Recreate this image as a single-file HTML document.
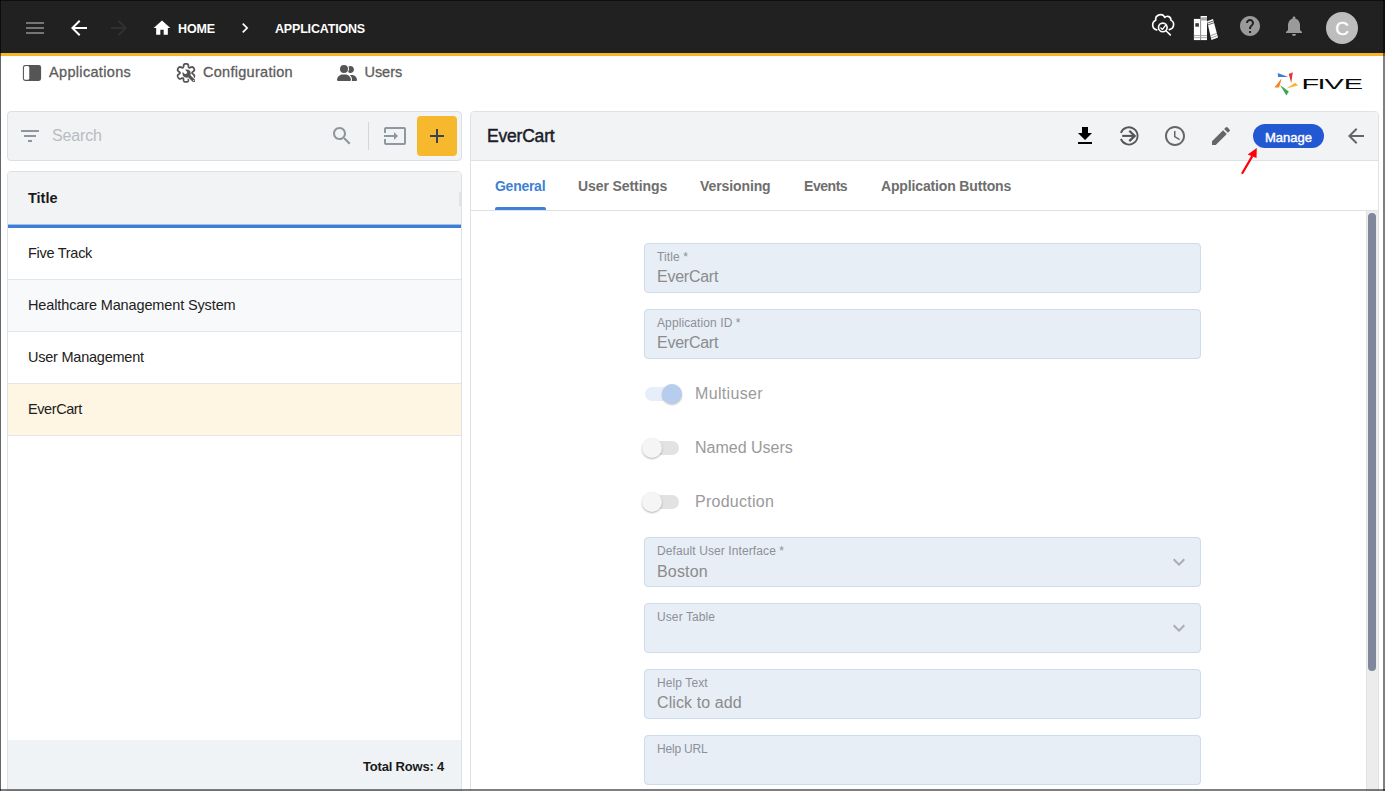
<!DOCTYPE html>
<html lang="en">
<head>
<meta charset="utf-8">
<title>Five - Applications</title>
<style>
*{box-sizing:border-box;margin:0;padding:0}
html,body{width:1385px;height:791px;overflow:hidden;background:#fff}
body{position:relative;font-family:"Liberation Sans",sans-serif;color:#222}
.abs{position:absolute}
.t{position:absolute;white-space:nowrap;line-height:1}
svg{position:absolute;overflow:visible}
/* frame */
#frame-top{left:0;top:0;width:1385px;height:1px;background:rgba(0,0,0,.55);z-index:50}
#frame-left{left:0;top:0;width:1px;height:791px;background:rgba(0,0,0,.6);z-index:50}
#frame-right{left:1383px;top:0;width:2px;height:791px;background:rgba(0,0,0,.5);z-index:50}
#frame-bottom{left:0;top:789px;width:1385px;height:2px;background:rgba(0,0,0,.5);z-index:50}
/* top bar */
#topbar{left:0;top:0;width:1385px;height:53px;background:#212121}
#orange{left:0;top:53px;width:1385px;height:3px;background:#f7b52c}
.crumb{color:#fff;font-weight:bold;font-size:12.5px;letter-spacing:-0.1px}
/* menu */
.menu{color:#5c5c5c;font-size:14.5px;-webkit-text-stroke:0.3px #5c5c5c}
/* left */
#search{left:7px;top:111px;width:455px;height:50px;background:#f1f3f5;border:1px solid #dcdfe2;border-radius:4px}
#addbtn{left:417px;top:116px;width:40px;height:40px;background:#f6b92e;border-radius:4px}
#tbl{left:7px;top:171px;width:455px;height:620px;border:1px solid #dfe2e5;border-radius:4px 4px 0 0;background:#fff;overflow:hidden}
#thead{left:0;top:0;width:453px;height:54px;background:#f1f3f5}
#tline{left:0;top:52px;width:453px;height:4px;background:#3c7dd6;border-top:1px solid #a3bfe8}
.row{position:absolute;left:0;width:453px;height:52px;border-bottom:1px solid #e3e6e9}
.row span{position:absolute;left:20px;top:18px;font-size:14.5px;line-height:1;color:#212121;white-space:nowrap}
#tfoot{left:0;top:568px;width:453px;height:51px;background:#eff3f5}
/* right */
#rpanel{left:470px;top:111px;width:909px;height:690px;border:1px solid #dfe2e5;border-radius:4px;background:#fff;overflow:hidden}
#rhead{left:0;top:0;width:907px;height:49px;background:#f1f3f5;border-bottom:1px solid #dfe2e5}
#tabs{left:0;top:49px;width:907px;height:50px;border-bottom:1px solid #dfe2e5;background:#fff}
.tab{position:absolute;top:18px;font-size:14px;font-weight:bold;color:#6e6e6e;white-space:nowrap;line-height:1}
.fld{position:absolute;left:644px;width:557px;height:50px;background:#e7eef6;border:1px solid #cddbec;border-radius:4px}
.fld .l{position:absolute;left:12px;top:7px;font-size:12px;letter-spacing:0.1px;color:#8d9096;line-height:1;white-space:nowrap}
.fld .v{position:absolute;left:12px;top:25px;font-size:16px;color:#8b8b8b;line-height:1;white-space:nowrap}
.tg{position:absolute;font-size:16px;color:#9a9a9a;line-height:1;white-space:nowrap;left:695px}
</style>
</head>
<body>
<!-- TOP BAR -->
<div class="abs" id="topbar"></div>
<div class="abs" id="orange"></div>

<!-- hamburger -->
<svg style="left:23px;top:16px" width="24" height="24" viewBox="0 0 24 24"><path fill="#757575" d="M3 18h18v-2H3v2zm0-5h18v-2H3v2zm0-7v2h18V6H3z"/></svg>
<!-- back -->
<svg style="left:67px;top:16px" width="24" height="24" viewBox="0 0 24 24"><path fill="#fff" d="M20 11H7.83l5.59-5.59L12 4l-8 8 8 8 1.41-1.41L7.83 13H20v-2z"/></svg>
<!-- forward -->
<svg style="left:107px;top:16px" width="24" height="24" viewBox="0 0 24 24"><path fill="#303030" d="M12 4l-1.41 1.41L16.170 11H4v2h12.170l-5.580 5.590L12 20l8-8z"/></svg>
<!-- home -->
<svg style="left:152px;top:18px" width="20" height="20" viewBox="0 0 24 24"><path fill="#fff" d="M10 20v-6h4v6h5v-8h3L12 3 2 12h3v8z"/></svg>
<div class="t crumb" style="left:178px;top:23px">HOME</div>
<svg style="left:235px;top:18px" width="20" height="20" viewBox="0 0 24 24"><path fill="#fff" d="M10 6L8.590 7.410 13.170 12l-4.580 4.590L10 18l6-6z"/></svg>
<div class="t crumb" style="left:275px;top:23px;letter-spacing:-0.18px">APPLICATIONS</div>

<!-- right icons -->
<svg id="ic-cloud" style="left:1145px;top:8px" width="40" height="32" viewBox="0 0 40 32" fill="none" stroke="#fff" stroke-width="1.650" stroke-linecap="round" stroke-linejoin="round">
<path d="M11.730 21.840A5.140 5.140 0 0 1 10.720 12.130A4.780 4.780 0 0 1 19.820 9.500A3.480 3.480 0 0 1 25.880 12.130A5.070 5.070 0 0 1 24.270 21.640"/>
<circle cx="17.800" cy="19.400" r="4.300"/>
<path d="M21.200 23L25.300 26.900"/>
<path d="M15.900 19.900l1.600 1.500 3.200-4.300" stroke-width="1.350"/>
</svg>
<svg id="ic-books" style="left:1185px;top:8px" width="40" height="36" viewBox="0 0 40 36">
<rect x="8.900" y="10.900" width="6.500" height="21.200" fill="#fff"/>
<rect x="8.900" y="12.800" width="6.500" height="0.500" fill="#ddd"/>
<rect x="10.300" y="15.200" width="3.600" height="3.500" fill="#3a3a3a"/>
<rect x="8.900" y="27.200" width="6.500" height="0.900" fill="#999"/>
<rect x="8.900" y="29.300" width="6.500" height="0.800" fill="#999"/>
<rect x="15.600" y="8" width="6.400" height="24.100" fill="#fff"/>
<rect x="15.400" y="10.900" width="0.700" height="21.200" fill="#8a8a8a"/>
<rect x="16.100" y="9.300" width="5.900" height="3.200" fill="#aaa"/>
<rect x="16" y="27.200" width="5.900" height="0.900" fill="#999"/>
<rect x="16" y="29.300" width="5.900" height="0.800" fill="#999"/>
<polygon points="22.100,13.200 28,10.900 33,29.600 26.400,31.900" fill="#fff"/>
<path d="M22.500 15.100L28.500 12.900M23 16.900L29 14.700" stroke="#444" stroke-width="0.850"/>
<path d="M25.300 27.700L32 25.400M25.900 29.900L32.600 27.600" stroke="#777" stroke-width="0.700"/>
</svg>
<svg style="left:1238px;top:14px" width="24" height="24" viewBox="0 0 24 24"><path fill="#9a9a9a" d="M12 2C6.480 2 2 6.480 2 12s4.480 10 10 10 10-4.480 10-10S17.520 2 12 2zm1 17h-2v-2h2v2zm2.070-7.750l-.9.920C13.450 12.900 13 13.500 13 15h-2v-.5c0-1.100.45-2.100 1.170-2.830l1.240-1.260c.37-.36.590-.86.590-1.410 0-1.100-.9-2-2-2s-2 .9-2 2H8c0-2.210 1.790-4 4-4s4 1.790 4 4c0 .88-.36 1.680-.93 2.250z"/></svg>
<svg style="left:1282px;top:14px" width="24" height="24" viewBox="0 0 24 24"><path fill="#9a9a9a" d="M12 22c1.100 0 2-.9 2-2h-4c0 1.100.89 2 2 2zm6-6v-5c0-3.070-1.640-5.640-4.500-6.320V4c0-.83-.67-1.500-1.500-1.500s-1.500.67-1.500 1.500v.68C7.630 5.360 6 7.920 6 11v5l-2 2v1h16v-1l-2-2z"/></svg>
<div class="abs" style="left:1326px;top:12px;width:32px;height:32px;border-radius:50%;background:#bdbdbd"></div>
<div class="t" style="left:1335.200px;top:18.500px;font-size:19px;color:#fff;-webkit-text-stroke:0.3px #fff">C</div>

<!-- MENU ROW -->
<svg style="left:22px;top:64px" width="20" height="18" viewBox="0 0 20 18"><rect x="0.9" y="0.9" width="18.2" height="16" rx="2.3" fill="#555"/><rect x="1.95" y="1.95" width="5.3" height="13.9" rx="1.6" fill="#fff"/></svg>
<div class="t menu" style="left:49px;top:65px;letter-spacing:0.33px">Applications</div>
<svg id="ic-cfg" style="left:170px;top:58px" width="40" height="32" viewBox="0 0 40 32" fill="none">
<mask id="wm"><rect x="0" y="0" width="40" height="32" fill="#fff"/><path d="M15.400 14.300L11.500 10.400" stroke="#000" stroke-width="3.300" stroke-linecap="round"/><circle cx="23.700" cy="22.600" r="0.650" fill="#000"/></mask>
<path d="M22.05 14.90 L22.08 15.11 L22.17 15.33 L22.35 15.57 L22.64 15.83 L23.06 16.14 L23.53 16.50 L23.96 16.88 L24.24 17.26 L24.37 17.62 L24.38 17.95 L24.33 18.27 L24.24 18.57 L24.12 18.86 L23.99 19.15 L23.84 19.43 L23.67 19.69 L23.49 19.95 L23.30 20.20 L23.08 20.43 L22.83 20.63 L22.54 20.79 L22.16 20.85 L21.70 20.80 L21.15 20.62 L20.60 20.39 L20.13 20.19 L19.75 20.06 L19.46 20.03 L19.22 20.06 L19.03 20.14 L18.86 20.27 L18.71 20.46 L18.60 20.73 L18.51 21.12 L18.45 21.63 L18.38 22.22 L18.26 22.78 L18.07 23.21 L17.83 23.50 L17.55 23.69 L17.25 23.80 L16.94 23.87 L16.63 23.92 L16.32 23.94 L16.00 23.95 L15.68 23.94 L15.37 23.92 L15.06 23.87 L14.75 23.80 L14.45 23.69 L14.17 23.50 L13.93 23.21 L13.74 22.78 L13.62 22.22 L13.55 21.63 L13.49 21.12 L13.40 20.73 L13.29 20.46 L13.14 20.27 L12.98 20.14 L12.78 20.06 L12.54 20.03 L12.25 20.06 L11.87 20.19 L11.40 20.39 L10.85 20.62 L10.30 20.80 L9.84 20.85 L9.46 20.79 L9.17 20.63 L8.92 20.43 L8.70 20.20 L8.51 19.95 L8.33 19.69 L8.16 19.43 L8.01 19.15 L7.88 18.86 L7.76 18.57 L7.67 18.27 L7.62 17.95 L7.63 17.62 L7.76 17.26 L8.04 16.88 L8.47 16.50 L8.94 16.14 L9.36 15.83 L9.65 15.57 L9.83 15.33 L9.92 15.11 L9.95 14.90 L9.92 14.69 L9.83 14.47 L9.65 14.23 L9.36 13.97 L8.94 13.66 L8.47 13.30 L8.04 12.92 L7.76 12.54 L7.63 12.18 L7.62 11.85 L7.67 11.53 L7.76 11.23 L7.88 10.94 L8.01 10.65 L8.16 10.38 L8.33 10.11 L8.51 9.85 L8.70 9.60 L8.92 9.37 L9.17 9.17 L9.46 9.01 L9.84 8.95 L10.30 9.00 L10.85 9.18 L11.40 9.41 L11.87 9.61 L12.25 9.74 L12.54 9.77 L12.78 9.74 L12.97 9.66 L13.14 9.53 L13.29 9.34 L13.40 9.07 L13.49 8.68 L13.55 8.17 L13.62 7.58 L13.74 7.02 L13.93 6.59 L14.17 6.30 L14.45 6.11 L14.75 6.00 L15.06 5.93 L15.37 5.88 L15.68 5.86 L16.00 5.85 L16.32 5.86 L16.63 5.88 L16.94 5.93 L17.25 6.00 L17.55 6.11 L17.83 6.30 L18.07 6.59 L18.26 7.02 L18.38 7.58 L18.45 8.17 L18.51 8.68 L18.60 9.07 L18.71 9.34 L18.86 9.53 L19.03 9.66 L19.22 9.74 L19.46 9.77 L19.75 9.74 L20.13 9.61 L20.60 9.41 L21.15 9.18 L21.70 9.00 L22.16 8.95 L22.54 9.01 L22.83 9.17 L23.08 9.37 L23.30 9.60 L23.49 9.85 L23.67 10.11 L23.84 10.37 L23.99 10.65 L24.12 10.94 L24.24 11.23 L24.33 11.53 L24.38 11.85 L24.37 12.18 L24.24 12.54 L23.96 12.92 L23.53 13.30 L23.06 13.66 L22.64 13.97 L22.35 14.23 L22.17 14.47 L22.08 14.69Z" stroke="#555" stroke-width="1.800" stroke-linejoin="round"/>
<path d="M19 18L23.700 22.600" stroke="#fff" stroke-width="4.800" stroke-linecap="round"/>
<g mask="url(#wm)"><circle cx="16.600" cy="15.600" r="4.100" fill="#555"/><path d="M17.500 16.500L23.700 22.600" stroke="#555" stroke-width="3.100" stroke-linecap="round"/></g>
</svg>
<div class="t menu" style="left:203px;top:65px;letter-spacing:0.28px">Configuration</div>
<svg style="left:336.85px;top:64.85px" width="20" height="16" viewBox="0 0 640 512"><path fill="#555" d="M96 128a128 128 0 1 1 256 0A128 128 0 1 1 96 128zM0 482.300C0 383.800 79.800 304 178.300 304h91.400C368.200 304 448 383.800 448 482.300c0 16.400-13.300 29.700-29.700 29.700H29.700C13.300 512 0 498.700 0 482.300zM609.300 512H471.400c5.400-9.400 8.600-20.300 8.600-32v-8c0-60.700-27.100-115.200-69.800-151.800c2.400-.1 4.700-.2 7.100-.2h61.400C567.800 320 640 392.200 640 481.300c0 17-13.800 30.700-30.700 30.700zM432 256c-31 0-59-12.600-79.300-32.900C372.400 196.500 384 163.600 384 128c0-26.800-6.600-52.100-18.300-74.300C384.300 40.100 407.200 32 432 32c61.900 0 112 50.100 112 112s-50.100 112-112 112z"/></svg>
<div class="t menu" style="left:364.500px;top:65px;letter-spacing:-0.05px">Users</div>

<!-- FIVE logo -->
<svg id="logo" style="left:1272px;top:70px" width="92" height="28" viewBox="0 0 92 28">
<polygon points="5.700,3.100 16.400,7.100 6.100,7.100" fill="#3b7ddd"/>
<polygon points="20.800,2.200 19.200,13 16.700,3.900" fill="#e0373a"/>
<polygon points="23.200,12.800 26,15.400 14.400,18.600" fill="#f9b52f"/>
<polygon points="8.100,15 16.800,21.500 14.400,25.400" fill="#3aa657"/>
<polygon points="9.700,8.300 7.100,17.600 2.400,17.600" fill="#f58426"/>
<text transform="translate(29.390,18.600) scale(2.100,1)" x="0 7.650 10.976 20.205" y="0" font-family="Liberation Sans, sans-serif" font-size="13.800" fill="#0a0a0a">FIVE</text>
</svg>

<!-- LEFT PANEL -->
<div class="abs" id="search"></div>
<svg style="left:18px;top:124px" width="24" height="24" viewBox="0 0 24 24"><path fill="#8f959c" d="M10 18h4v-2h-4v2zM3 6v2h18V6H3zm3 7h12v-2H6v2z"/></svg>
<div class="t" style="left:52px;top:128px;font-size:16px;letter-spacing:-0.15px;color:#b9bcc0">Search</div>
<svg style="left:330px;top:124px" width="24" height="24" viewBox="0 0 24 24"><path fill="#8e959c" d="M15.500 14h-.79l-.28-.27C15.410 12.590 16 11.110 16 9.500 16 5.910 13.090 3 9.500 3S3 5.910 3 9.500 5.910 16 9.500 16c1.610 0 3.090-.59 4.230-1.570l.27.280v.79l5 4.990L20.490 19l-4.990-5zm-6 0C7.010 14 5 11.990 5 9.500S7.010 5 9.500 5 14 7.010 14 9.500 11.990 14 9.500 14z"/></svg>
<div class="abs" style="left:368px;top:122px;width:1px;height:28px;background:#d4d7da"></div>
<svg style="left:383px;top:124px" width="24" height="24" viewBox="0 0 24 24"><path fill="#8e98a1" d="M21 3.010H3c-1.100 0-2 .9-2 2V9h2V4.990h18v14.030H3V15H1v4.010c0 1.100.9 1.980 2 1.980h18c1.100 0 2-.88 2-1.980v-14c0-1.110-.9-2-2-2zM11 16l4-4-4-4v3H1v2h10v3z"/></svg>
<div class="abs" id="addbtn"></div>
<svg style="left:425px;top:124px" width="24" height="24" viewBox="0 0 24 24"><path fill="#3b4150" d="M19 13h-6v6h-2v-6H5v-2h6V5h2v6h6v2z"/></svg>

<div class="abs" id="tbl">
  <div class="abs" id="thead"></div>
  <div class="t" style="left:20px;top:19px;font-size:14.500px;font-weight:bold;color:#1a1a1a">Title</div>
  <div class="abs" style="left:451px;top:20px;width:2px;height:14px;background:#e1e3e5"></div>
  <div class="abs" id="tline"></div>
  <div class="row" style="top:56px;background:#fff"><span style="letter-spacing:-0.28px">Five Track</span></div>
  <div class="row" style="top:108px;background:#f8f9fb"><span style="letter-spacing:-0.13px">Healthcare Management System</span></div>
  <div class="row" style="top:160px;background:#fff"><span style="letter-spacing:-0.23px">User Management</span></div>
  <div class="row" style="top:212px;background:#fef5e3"><span style="letter-spacing:-0.42px">EverCart</span></div>
  <div class="abs" id="tfoot"></div>
  <div class="t" style="right:17px;top:588px;font-size:13px;font-weight:bold;letter-spacing:-0.2px;color:#1a1a1a">Total Rows: 4</div>
</div>

<!-- RIGHT PANEL -->
<div class="abs" id="rpanel">
  <div class="abs" id="rhead"></div>
  <div class="abs" id="tabs"></div>
</div>
<div class="t" style="left:487px;top:128px;font-size:17.5px;letter-spacing:-0.2px;color:#1c1c28;-webkit-text-stroke:0.45px #1c1c28">EverCart</div>

<svg style="left:1073px;top:123.5px" width="24" height="24" viewBox="0 0 24 24"><path fill="#000" d="M19 9h-4V3H9v6H5l7 7 7-7zM5 18v2h14v-2H5z"/></svg>
<svg style="left:1105px;top:115px" width="50" height="40" viewBox="0 0 50 40" fill="none" stroke="#555"><path d="M15.900 17.900A8.600 8.600 0 1 1 15.900 23.900" stroke-width="1.800"/><path d="M17.200 20.900H29" stroke-width="2.050"/><path d="M24.300 15.700L29.700 20.900L24.300 26.100" stroke-width="2.250"/></svg>
<svg style="left:1163px;top:124px" width="24" height="24" viewBox="0 0 24 24"><path fill="#666" d="M11.990 2C6.470 2 2 6.480 2 12s4.470 10 9.990 10C17.520 22 22 17.520 22 12S17.520 2 11.990 2zM12 20c-4.420 0-8-3.580-8-8s3.580-8 8-8 8 3.580 8 8-3.580 8-8 8zm.5-13H11v6l5.250 3.150.75-1.230-4.500-2.670z"/></svg>
<svg style="left:1209px;top:124px" width="24" height="24" viewBox="0 0 24 24"><path fill="#666" d="M3 17.250V21h3.750L17.810 9.940l-3.750-3.750L3 17.250zM20.710 7.040c.39-.39.390-1.020 0-1.410l-2.340-2.340a.9959.996 0 0 0-1.410 0l-1.830 1.830 3.750 3.750 1.830-1.830z"/></svg>
<div class="abs" style="left:1253px;top:123.600px;width:71px;height:24.700px;border-radius:12.400px;background:#2358d3"></div>
<div class="t" style="left:1265px;top:131px;font-size:13px;color:#fff;-webkit-text-stroke:0.4px #fff">Manage</div>
<svg style="left:1344px;top:124px" width="24" height="24" viewBox="0 0 24 24"><path fill="#666" d="M20 11H7.830l5.590-5.590L12 4l-8 8 8 8 1.410-1.410L7.830 13H20v-2z"/></svg>
<!-- red arrow -->
<svg style="left:1238px;top:146px" width="24" height="30" viewBox="0 0 24 30"><path d="M4 27.750L14.300 10.100" stroke="#fb0207" stroke-width="2.200" fill="none"/><polygon points="18.800,1.900 9.700,8.400 18.500,12.100" fill="#fb0207"/></svg>

<!-- tabs -->
<div class="tab" style="left:495px;top:179px;color:#3f7fd6;letter-spacing:-0.27px">General</div>
<div class="abs" style="left:495px;top:207px;width:51px;height:3px;background:#3f7fd6;border-radius:2px 2px 0 0"></div>
<div class="tab" style="left:578px;top:179px;letter-spacing:-0.09px">User Settings</div>
<div class="tab" style="left:700px;top:179px;letter-spacing:-0.1px">Versioning</div>
<div class="tab" style="left:804px;top:179px;letter-spacing:-0.45px">Events</div>
<div class="tab" style="left:881px;top:179px;letter-spacing:-0.15px">Application Buttons</div>

<!-- form -->
<div class="fld" style="top:243px"><span class="l">Title *</span><span class="v" style="letter-spacing:-0.25px">EverCart</span></div>
<div class="fld" style="top:309px"><span class="l">Application ID *</span><span class="v" style="letter-spacing:-0.25px">EverCart</span></div>

<!-- toggles -->
<div class="abs" style="left:645px;top:387px;width:34px;height:14px;border-radius:7px;background:#e6eefa"></div>
<div class="abs" style="left:662px;top:384px;width:20px;height:20px;border-radius:50%;background:#b6cdee;box-shadow:0 1px 2px rgba(0,0,0,.25)"></div>
<div class="tg" style="top:386px;letter-spacing:0.33px">Multiuser</div>

<div class="abs" style="left:645px;top:441px;width:34px;height:14px;border-radius:7px;background:#e2e2e2"></div>
<div class="abs" style="left:642px;top:438px;width:20px;height:20px;border-radius:50%;background:#f5f5f5;box-shadow:0 1px 2px rgba(0,0,0,.3)"></div>
<div class="tg" style="top:440px">Named Users</div>

<div class="abs" style="left:645px;top:495px;width:34px;height:14px;border-radius:7px;background:#e2e2e2"></div>
<div class="abs" style="left:642px;top:492px;width:20px;height:20px;border-radius:50%;background:#f5f5f5;box-shadow:0 1px 2px rgba(0,0,0,.3)"></div>
<div class="tg" style="top:494px;letter-spacing:0.26px">Production</div>

<div class="fld" style="top:537px"><span class="l">Default User Interface *</span><span class="v" style="top:26px;letter-spacing:0.17px">Boston</span>
<svg style="left:522px;top:12px" width="24" height="24" viewBox="0 0 24 24"><path fill="#a9adb3" d="M7.410 8.590L12 13.170l4.590-4.580L18 10l-6 6-6-6 1.410-1.410z"/></svg></div>
<div class="fld" style="top:603px"><span class="l">User Table</span>
<svg style="left:522px;top:12px" width="24" height="24" viewBox="0 0 24 24"><path fill="#a9adb3" d="M7.410 8.590L12 13.170l4.590-4.580L18 10l-6 6-6-6 1.410-1.410z"/></svg></div>
<div class="fld" style="top:669px"><span class="l">Help Text</span><span class="v" style="letter-spacing:0.1px">Click to add</span></div>
<div class="fld" style="top:735px"><span class="l" style="letter-spacing:-0.2px">Help URL</span></div>

<!-- scrollbar -->
<div class="abs" style="left:1366px;top:211px;width:12px;height:580px;background:#ececec;border-left:1px solid #e2e2e2"></div>
<div class="abs" style="left:1368px;top:213px;width:8px;height:458px;border-radius:4px;background:#80879a"></div>

<!-- frame -->
<div class="abs" id="frame-top"></div>
<div class="abs" id="frame-left"></div>
<div class="abs" id="frame-right"></div>
<div class="abs" id="frame-bottom"></div>
</body>
</html>
